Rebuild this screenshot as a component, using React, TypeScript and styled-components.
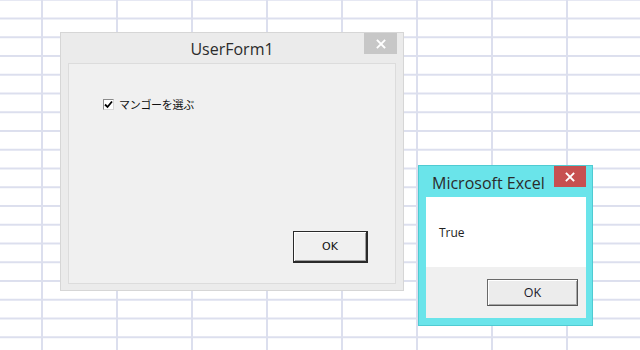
import React from "react";
import styled, { createGlobalStyle } from "styled-components";

const Global = createGlobalStyle`
  html, body { margin: 0; padding: 0; background: #ffffff; }
  body { font-family: "Open Sans", "Noto Sans", sans-serif; }
`;

const Sheet = styled.div`
  position: relative;
  width: 640px;
  height: 350px;
  overflow: hidden;
  background-color: #ffffff;
  background-image:
    linear-gradient(to right, #dcdfee 0, #dcdfee 2px, transparent 2px),
    linear-gradient(to bottom, #dcdfee 0, #dcdfee 2px, transparent 2px);
  background-size: 75px 100%, 100% 18.75px;
  background-position: 41px 0, 0 17.5px;
`;

const Window = styled.div<{ $left: number; $top: number; $w: number; $h: number; $bg: string; $edge: string }>`
  position: absolute;
  left: ${(p) => p.$left}px;
  top: ${(p) => p.$top}px;
  width: ${(p) => p.$w}px;
  height: ${(p) => p.$h}px;
  box-sizing: border-box;
  background: ${(p) => p.$bg};
  border: 1px solid ${(p) => p.$edge};
  display: flex;
  flex-direction: column;
`;

const TitleBar = styled.div<{ $h: number; $center?: boolean }>`
  position: relative;
  height: ${(p) => p.$h}px;
  flex: none;
  display: flex;
  align-items: center;
  justify-content: ${(p) => (p.$center ? "center" : "flex-start")};
`;

const Title = styled.span<{ $size: number; $pad?: number }>`
  font-family: "Open Sans", "Noto Sans", sans-serif;
  font-size: ${(p) => p.$size}px;
  color: #2b2b2b;
  padding-left: ${(p) => p.$pad ?? 0}px;
  padding-top: 2px;
`;

const CloseButton = styled.div<{ $bg: string; $right: number; $w: number }>`
  position: absolute;
  top: 0;
  right: ${(p) => p.$right}px;
  width: ${(p) => p.$w}px;
  height: 21px;
  background: ${(p) => p.$bg};
  display: flex;
  align-items: center;
  justify-content: center;
`;

const FormBody = styled.div`
  flex: 1;
  margin: 0 7px 6px 7px;
  background: #f0f0f0;
  border: 1px solid #dcdcdc;
  padding: 34px 27px 20px 34px;
  display: flex;
  flex-direction: column;
  justify-content: space-between;
`;

const CheckRow = styled.label`
  display: flex;
  align-items: center;
  gap: 5px;
  font-family: "Noto Sans CJK JP", sans-serif;
  font-size: 11px;
  letter-spacing: -0.3px;
  color: #111;
  line-height: 13px;
`;

const CheckBox = styled.span`
  width: 11px;
  height: 11px;
  box-sizing: border-box;
  border: 1px solid #8a8a8a;
  border-right-color: #d8d8d8;
  border-bottom-color: #d8d8d8;
  background: #ffffff;
  display: flex;
  align-items: center;
  justify-content: center;
`;

const ButtonRow = styled.div<{ $pad?: string }>`
  display: flex;
  justify-content: flex-end;
  padding: ${(p) => p.$pad ?? "0"};
`;

const FormButton = styled.div`
  width: 75px;
  height: 32px;
  box-sizing: border-box;
  border: 1px solid #2a2a2a;
  border-right-width: 2px;
  border-bottom-width: 2px;
  box-shadow: inset 1px 1px #ffffff, inset -1px -1px #a0a0a0;
  background: #f0f0f0;
  display: flex;
  align-items: center;
  justify-content: center;
  font-family: "DejaVu Sans", sans-serif;
  font-size: 11px;
  color: #111;
`;

const MsgBody = styled.div`
  flex: 1;
  margin: 0 6px 7px 7px;
  display: flex;
  flex-direction: column;
`;

const MsgText = styled.div`
  height: 70px;
  background: #ffffff;
  box-sizing: border-box;
  padding: 27px 0 0 13px;
  font-family: "Open Sans", "Noto Sans", sans-serif;
  font-size: 12px;
  color: #222;
`;

const MsgFooter = styled.div`
  flex: 1;
  background: #f0f0f0;
`;

const MsgButton = styled.div`
  width: 91px;
  height: 27px;
  box-sizing: border-box;
  border: 1px solid #6a6a6a;
  border-right-color: #555;
  border-bottom-color: #555;
  box-shadow: inset 1px 1px #ffffff, inset -1px -1px #a8a8a8;
  background: #ececec;
  display: flex;
  align-items: center;
  justify-content: center;
  font-family: "Open Sans", "Noto Sans", sans-serif;
  font-size: 12.5px;
  color: #1a1a2a;
`;

const Cross = () => (
  <svg width="10" height="10" viewBox="0 0 10 10">
    <path d="M1.5 1.5 L8.5 8.5 M8.5 1.5 L1.5 8.5" stroke="#ffffff" strokeWidth="1.8" strokeLinecap="square" />
  </svg>
);

const Tick = () => (
  <svg width="9" height="9" viewBox="0 0 9 9">
    <path d="M1 4.5 L3.5 7 L8 1.5" stroke="#000" strokeWidth="1.8" fill="none" />
  </svg>
);

export default function App() {
  return (
    <>
      <Global />
      <Sheet>
        <Window $left={60} $top={32} $w={344} $h={259} $bg="#ebebeb" $edge="#d6d6d6">
          <TitleBar $h={30} $center>
            <Title $size={16}>UserForm1</Title>
            <CloseButton $bg="#c7c7c7" $right={6} $w={33}>
              <Cross />
            </CloseButton>
          </TitleBar>
          <FormBody>
            <CheckRow>
              <CheckBox>
                <Tick />
              </CheckBox>
              マンゴーを選ぶ
            </CheckRow>
            <ButtonRow>
              <FormButton>OK</FormButton>
            </ButtonRow>
          </FormBody>
        </Window>

        <Window $left={418} $top={165} $w={175} $h={161} $bg="#6ae4ea" $edge="#4fcbd2">
          <TitleBar $h={31}>
            <Title $size={16} $pad={13}>Microsoft Excel</Title>
            <CloseButton $bg="#c75050" $right={6} $w={32}>
              <Cross />
            </CloseButton>
          </TitleBar>
          <MsgBody>
            <MsgText>True</MsgText>
            <MsgFooter>
              <ButtonRow $pad="12px 8px 0 0">
                <MsgButton>OK</MsgButton>
              </ButtonRow>
            </MsgFooter>
          </MsgBody>
        </Window>
      </Sheet>
    </>
  );
}
